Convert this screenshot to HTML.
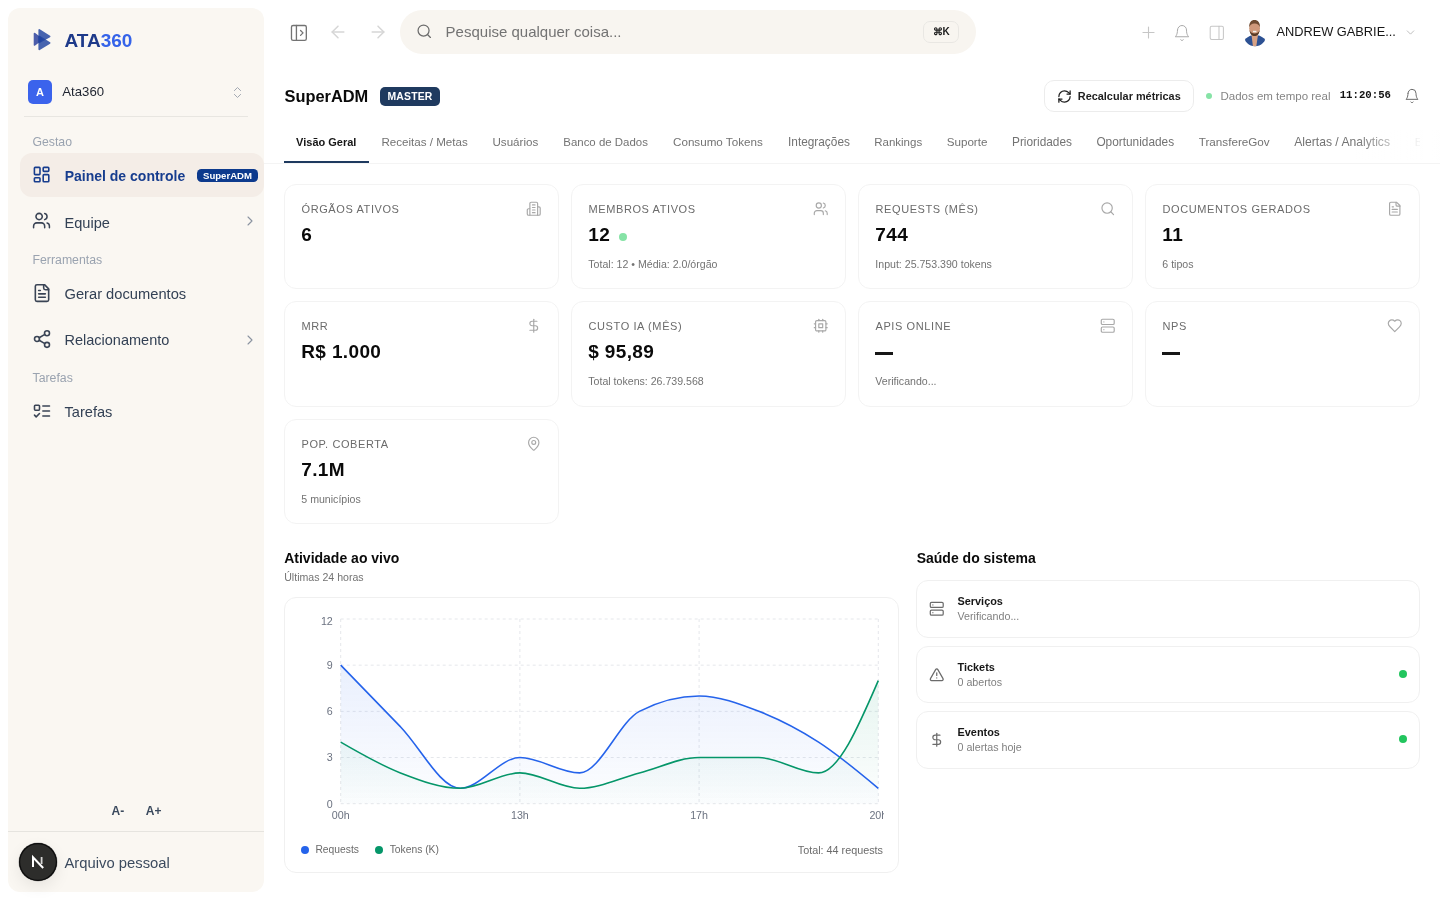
<!DOCTYPE html>
<html><head><meta charset="utf-8"><title>SuperADM</title>
<style>
html,body{margin:0;padding:0;}
body{width:1440px;height:900px;position:relative;overflow:hidden;background:#fff;font-family:"Liberation Sans", sans-serif;}
.t{position:absolute;white-space:nowrap;line-height:1;}
svg{display:block}
</style></head><body>
<div id="root" style="position:absolute;left:0;top:0;width:1440px;height:900px;will-change:transform;">
<div style="position:absolute;left:8px;top:8px;width:256px;height:884px;background:#faf7f2;border-radius:12px;"></div>
<svg style="position:absolute;left:33px;top:28px" width="18" height="23" viewBox="0 0 18 23"><path d="M1.6 5.6 L8.8 11.3 L1.6 16.9 Z" fill="#273d9c" opacity="0.82" stroke="#273d9c" stroke-width="1.8" stroke-linejoin="round"/><path d="M6.3 2.0 L16.6 8.4 L6.3 14.2 Z" fill="#2144a1" opacity="0.82" stroke="#2144a1" stroke-width="1.8" stroke-linejoin="round"/><path d="M6.3 8.6 L16.6 14.9 L6.3 21.2 Z" fill="#2144a1" opacity="0.82" stroke="#2144a1" stroke-width="1.8" stroke-linejoin="round"/></svg>
<div class="t" style="left:64.50px;top:31.00px;font-size:19px;font-weight:700;color:#000;"><span style="color:#1e3a8a">ATA</span><span style="color:#3563e9">360</span></div>
<div style="position:absolute;left:28px;top:80px;width:24px;height:24px;background:#3b63ec;border-radius:5px;"></div>
<div class="t" style="left:40.00px;top:87.00px;font-size:11px;font-weight:700;color:#fff;transform:translateX(-50%);">A</div>
<div class="t" style="left:62.30px;top:85.00px;font-size:13.2px;font-weight:400;color:#1f2430;">Ata360</div>
<svg style="position:absolute;left:229.50px;top:84.50px;" width="15" height="15" viewBox="0 0 24 24" fill="none" stroke="#a3a9b2" stroke-width="1.6" stroke-linecap="round" stroke-linejoin="round"><path d="m7 15 5 5 5-5"/><path d="m7 9 5-5 5 5"/></svg>
<div style="position:absolute;left:24px;top:116px;width:224px;height:1px;background:#e8e6e1;"></div>
<div class="t" style="left:32.50px;top:136.00px;font-size:12.25px;font-weight:400;color:#9aa3b0;">Gestao</div>
<div style="position:absolute;left:20px;top:153px;width:244px;height:44px;background:#f4ede7;border-radius:12px;"></div>
<svg style="position:absolute;left:32.40px;top:165.20px;" width="19.2" height="19.2" viewBox="0 0 24 24" fill="none" stroke="#173d8e" stroke-width="2" stroke-linecap="round" stroke-linejoin="round"><rect x="3" y="3" width="7" height="9" rx="1"/><rect x="14" y="3" width="7" height="5" rx="1"/><rect x="14" y="12" width="7" height="9" rx="1"/><rect x="3" y="16" width="7" height="5" rx="1"/></svg>
<div class="t" style="left:64.70px;top:169.00px;font-size:14px;font-weight:700;color:#173d8e;">Painel de controle</div>
<div style="position:absolute;left:197px;top:169px;width:61px;height:13px;background:#0d3a8d;border-radius:4.5px;"></div>
<div class="t" style="left:227.50px;top:171.00px;font-size:9.6px;font-weight:700;color:#fff;transform:translateX(-50%);">SuperADM</div>
<svg style="position:absolute;left:32.30px;top:211.00px;" width="19" height="19" viewBox="0 0 24 24" fill="none" stroke="#3a4455" stroke-width="1.9" stroke-linecap="round" stroke-linejoin="round"><path d="M16 21v-2a4 4 0 0 0-4-4H6a4 4 0 0 0-4 4v2"/><circle cx="9" cy="7" r="4"/><path d="M22 21v-2a4 4 0 0 0-3-3.87"/><path d="M16 3.13a4 4 0 0 1 0 7.75"/></svg>
<div class="t" style="left:64.50px;top:216.00px;font-size:14.6px;font-weight:400;color:#334155;">Equipe</div>
<svg style="position:absolute;left:242.00px;top:213.00px;" width="16" height="16" viewBox="0 0 24 24" fill="none" stroke="#8a93a0" stroke-width="1.6" stroke-linecap="round" stroke-linejoin="round"><path d="m9 18 6-6-6-6"/></svg>
<div class="t" style="left:32.50px;top:254.00px;font-size:12.3px;font-weight:400;color:#9aa3b0;">Ferramentas</div>
<svg style="position:absolute;left:31.50px;top:283.00px;" width="20" height="20" viewBox="0 0 24 24" fill="none" stroke="#3a4455" stroke-width="1.9" stroke-linecap="round" stroke-linejoin="round"><path d="M15 2H6a2 2 0 0 0-2 2v16a2 2 0 0 0 2 2h12a2 2 0 0 0 2-2V7Z"/><path d="M14 2v4a2 2 0 0 0 2 2h4"/><path d="M10 9H8"/><path d="M16 13H8"/><path d="M16 17H8"/></svg>
<div class="t" style="left:64.50px;top:287.00px;font-size:14.7px;font-weight:400;color:#334155;">Gerar documentos</div>
<svg style="position:absolute;left:31.50px;top:329.00px;" width="20" height="20" viewBox="0 0 24 24" fill="none" stroke="#3a4455" stroke-width="1.9" stroke-linecap="round" stroke-linejoin="round"><circle cx="18" cy="5" r="3"/><circle cx="6" cy="12" r="3"/><circle cx="18" cy="19" r="3"/><line x1="8.59" x2="15.42" y1="13.51" y2="17.49"/><line x1="15.41" x2="8.59" y1="6.51" y2="10.49"/></svg>
<div class="t" style="left:64.50px;top:333.00px;font-size:14.5px;font-weight:400;color:#334155;">Relacionamento</div>
<svg style="position:absolute;left:242.00px;top:332.00px;" width="16" height="16" viewBox="0 0 24 24" fill="none" stroke="#8a93a0" stroke-width="1.6" stroke-linecap="round" stroke-linejoin="round"><path d="m9 18 6-6-6-6"/></svg>
<div class="t" style="left:32.50px;top:372.00px;font-size:12.3px;font-weight:400;color:#9aa3b0;">Tarefas</div>
<svg style="position:absolute;left:31.50px;top:401.00px;" width="20" height="20" viewBox="0 0 24 24" fill="none" stroke="#3a4455" stroke-width="1.9" stroke-linecap="round" stroke-linejoin="round"><rect x="3" y="5" width="6" height="6" rx="1"/><path d="m3 17 2 2 4-4"/><path d="M13 6h8"/><path d="M13 12h8"/><path d="M13 18h8"/></svg>
<div class="t" style="left:64.50px;top:405.00px;font-size:14.6px;font-weight:400;color:#334155;">Tarefas</div>
<div class="t" style="left:111.50px;top:805.00px;font-size:12px;font-weight:700;color:#3b4a5e;">A-</div>
<div class="t" style="left:145.80px;top:805.00px;font-size:12px;font-weight:700;color:#3b4a5e;">A+</div>
<div style="position:absolute;left:8px;top:831px;width:256px;height:1px;background:#e6e4df;"></div>
<div class="t" style="left:64.50px;top:856.00px;font-size:14.8px;font-weight:400;color:#3b4a5e;">Arquivo pessoal</div>
<div style="position:absolute;left:19px;top:843px;width:38px;height:38px;border-radius:50%;background:#2d2d2b;box-shadow:inset 0 0 0 1.2px #0d0d0d,0 0 0 0.6px rgba(120,120,120,0.5),0 6px 16px rgba(0,0,0,0.08);"></div>
<svg style="position:absolute;left:28px;top:852px" width="20" height="20" viewBox="0 0 20 20"><path d="M5 15V5.2 L15.2 16" stroke="#fff" stroke-width="2" fill="none"/><path d="M13.6 5v7" stroke="#fff" stroke-width="1.8" fill="none" opacity="0.8"/></svg>
<svg style="position:absolute;left:288.60px;top:22.80px;" width="19.8" height="19.8" viewBox="0 0 24 24" fill="none" stroke="#737373" stroke-width="1.6" stroke-linecap="round" stroke-linejoin="round"><rect x="3" y="3" width="18" height="18" rx="2"/><path d="M9 3v18"/><path d="m14 9 3 3-3 3"/></svg>
<svg style="position:absolute;left:327.50px;top:21.50px;" width="20" height="20" viewBox="0 0 24 24" fill="none" stroke="#d6d6d6" stroke-width="1.8" stroke-linecap="round" stroke-linejoin="round"><path d="m12 19-7-7 7-7"/><path d="M19 12H5"/></svg>
<svg style="position:absolute;left:367.50px;top:21.50px;" width="20" height="20" viewBox="0 0 24 24" fill="none" stroke="#d6d6d6" stroke-width="1.8" stroke-linecap="round" stroke-linejoin="round"><path d="M5 12h14"/><path d="m12 5 7 7-7 7"/></svg>
<div style="position:absolute;left:400px;top:10px;width:576px;height:44px;background:#f8f5f0;border-radius:22px;"></div>
<svg style="position:absolute;left:416.30px;top:23.20px;" width="16.5" height="16.5" viewBox="0 0 24 24" fill="none" stroke="#6b6b6b" stroke-width="1.8" stroke-linecap="round" stroke-linejoin="round"><circle cx="11" cy="11" r="8"/><path d="m21 21-4.3-4.3"/></svg>
<div class="t" style="left:445.60px;top:24.00px;font-size:15px;font-weight:400;color:#737373;">Pesquise qualquer coisa...</div>
<div style="position:absolute;left:923px;top:21px;width:36px;height:21.5px;border:1px solid #e9e7e3;border-radius:7px;box-sizing:border-box;"></div>
<div class="t" style="left:941.20px;top:27.00px;font-size:10px;font-weight:700;color:#1a1a1a;transform:translateX(-50%);">⌘K</div>
<svg style="position:absolute;left:1138.50px;top:22.50px;" width="19" height="19" viewBox="0 0 24 24" fill="none" stroke="#c6c6c6" stroke-width="1.4" stroke-linecap="round" stroke-linejoin="round"><path d="M5 12h14"/><path d="M12 5v14"/></svg>
<svg style="position:absolute;left:1173.00px;top:24.00px;" width="18" height="18" viewBox="0 0 24 24" fill="none" stroke="#a8a8a8" stroke-width="1.3" stroke-linecap="round" stroke-linejoin="round"><path d="M6 8a6 6 0 0 1 12 0c0 7 3 9 3 9H3s3-2 3-9"/><path d="M10.3 21a1.94 1.94 0 0 0 3.4 0"/></svg>
<svg style="position:absolute;left:1207.70px;top:23.60px;" width="17.6" height="17.6" viewBox="0 0 24 24" fill="none" stroke="#c6c6c6" stroke-width="1.4" stroke-linecap="round" stroke-linejoin="round"><rect x="3" y="3" width="18" height="18" rx="2"/><path d="M15 3v18"/></svg>
<svg style="position:absolute;left:1243px;top:19px" width="24" height="28" viewBox="0 0 24 28"><defs><clipPath id="avc"><circle cx="12" cy="16" r="11.2"/></clipPath></defs><g clip-path="url(#avc)"><ellipse cx="12" cy="27.5" rx="12.5" ry="11.5" fill="#2d5193"/><path d="M8.5 16 L15 16 L13.2 28 L10 28 Z" fill="#d7a184"/></g><ellipse cx="11.6" cy="9.2" rx="5.4" ry="7.4" fill="#cf987a"/><path d="M6.2 8.5 C6 3.5 8 1 11.5 1 C15 1 17.2 3.5 17 8.5 C16 5.5 14 4.5 11.5 4.6 C9 4.5 7.2 5.5 6.2 8.5 Z" fill="#6e4a30"/><path d="M6.5 11 C7 15.5 9 17 11.6 17 C14.2 17 16.2 15.5 16.7 11 C15.5 13.8 14 14.5 11.6 14.5 C9.2 14.5 7.7 13.8 6.5 11 Z" fill="#5b3b26"/><rect x="10" y="11.8" width="3.4" height="1.5" fill="#f4f1ea"/></svg>
<div class="t" style="left:1276.40px;top:26.00px;font-size:12.8px;font-weight:400;color:#171717;">ANDREW GABRIE...</div>
<svg style="position:absolute;left:1403.50px;top:25.50px;" width="13" height="13" viewBox="0 0 24 24" fill="none" stroke="#b5b5b5" stroke-width="1.6" stroke-linecap="round" stroke-linejoin="round"><path d="m6 9 6 6 6-6"/></svg>
<div class="t" style="left:284.50px;top:88.00px;font-size:16.4px;font-weight:700;color:#0a0a0a;">SuperADM</div>
<div style="position:absolute;left:380px;top:87px;width:60px;height:19px;background:#1f3a5f;border-radius:5px;"></div>
<div class="t" style="left:410.00px;top:92.00px;font-size:10.4px;font-weight:700;color:#fff;letter-spacing:0.2px;transform:translateX(-50%);">MASTER</div>
<div style="position:absolute;left:1044px;top:80px;width:149.5px;height:31.5px;background:#fff;border:1px solid #ececec;border-radius:10px;box-sizing:border-box;"></div>
<svg style="position:absolute;left:1056.50px;top:89.00px;" width="15" height="15" viewBox="0 0 24 24" fill="none" stroke="#1f1f1f" stroke-width="2" stroke-linecap="round" stroke-linejoin="round"><path d="M3 12a9 9 0 0 1 9-9 9.75 9.75 0 0 1 6.74 2.74L21 8"/><path d="M21 3v5h-5"/><path d="M21 12a9 9 0 0 1-9 9 9.75 9.75 0 0 1-6.74-2.74L3 16"/><path d="M8 16H3v5"/></svg>
<div class="t" style="left:1077.80px;top:91.00px;font-size:10.9px;font-weight:700;color:#1f1f1f;">Recalcular métricas</div>
<div style="position:absolute;left:1206px;top:93px;width:6px;height:6px;background:#86e3a6;border-radius:50%;"></div>
<div class="t" style="left:1220.50px;top:91.00px;font-size:11.5px;font-weight:400;color:#858585;">Dados em tempo real</div>
<div class="t" style="left:1339.70px;top:89.84px;font-size:10.7px;font-weight:700;color:#111;font-family:'Liberation Mono', monospace;">11:20:56</div>
<svg style="position:absolute;left:1404.20px;top:87.80px;" width="16" height="16" viewBox="0 0 24 24" fill="none" stroke="#6b6b6b" stroke-width="1.5" stroke-linecap="round" stroke-linejoin="round"><path d="M6 8a6 6 0 0 1 12 0c0 7 3 9 3 9H3s3-2 3-9"/><path d="M10.3 21a1.94 1.94 0 0 0 3.4 0"/></svg>
<div style="position:absolute;left:264px;top:163px;width:1176px;height:1px;background:#f4f4f4;"></div>
<div style="position:absolute;left:284px;top:160.6px;width:85px;height:2.4px;background:#1e3a5f;"></div>
<div class="t" style="left:296.10px;top:137.00px;font-size:11px;font-weight:700;color:#171717;">Visão Geral</div>
<div class="t" style="left:381.40px;top:136.00px;font-size:11.6px;font-weight:400;color:#737373;">Receitas / Metas</div>
<div class="t" style="left:492.50px;top:136.00px;font-size:11.6px;font-weight:400;color:#737373;">Usuários</div>
<div class="t" style="left:563.30px;top:137.00px;font-size:11.45px;font-weight:400;color:#737373;">Banco de Dados</div>
<div class="t" style="left:673.00px;top:136.00px;font-size:11.65px;font-weight:400;color:#737373;">Consumo Tokens</div>
<div class="t" style="left:788.00px;top:137.00px;font-size:11.85px;font-weight:400;color:#737373;">Integrações</div>
<div class="t" style="left:874.20px;top:137.00px;font-size:11.5px;font-weight:400;color:#737373;">Rankings</div>
<div class="t" style="left:946.70px;top:136.00px;font-size:11.65px;font-weight:400;color:#737373;">Suporte</div>
<div class="t" style="left:1012.00px;top:137.00px;font-size:11.85px;font-weight:400;color:#737373;">Prioridades</div>
<div class="t" style="left:1096.40px;top:137.00px;font-size:11.85px;font-weight:400;color:#737373;">Oportunidades</div>
<div class="t" style="left:1198.70px;top:136.00px;font-size:11.7px;font-weight:400;color:#737373;">TransfereGov</div>
<div class="t" style="left:1294.20px;top:136.00px;font-size:12.15px;font-weight:400;color:#737373;">Alertas / Analytics</div>
<div style="position:absolute;left:1414px;top:130px;width:6px;height:20px;overflow:hidden">
<div class="t" style="left:0.70px;top:7.00px;font-size:11.5px;font-weight:400;color:#737373;">Billing</div>
</div>
<div style="position:absolute;left:1355px;top:130px;width:85px;height:30px;background:linear-gradient(to right,rgba(255,255,255,0),rgba(255,255,255,0.92) 75%,#fff);"></div>
<div style="position:absolute;left:284px;top:184px;width:275px;height:105px;background:#fff;border:1px solid #f3f3f3;border-radius:12px;box-sizing:border-box;"></div>
<div class="t" style="left:301.50px;top:204.00px;font-size:11px;font-weight:400;color:#6b6b6b;letter-spacing:0.6px;">ÓRGÃOS ATIVOS</div>
<div class="t" style="left:301.30px;top:225.00px;font-size:19px;font-weight:700;color:#0a0a0a;letter-spacing:0.35px;">6</div>
<svg style="position:absolute;left:526.20px;top:201.00px;" width="15.5" height="15.5" viewBox="0 0 24 24" fill="none" stroke="#a8a8a8" stroke-width="1.8" stroke-linecap="round" stroke-linejoin="round"><path d="M6 22V4a2 2 0 0 1 2-2h8a2 2 0 0 1 2 2v18Z"/><path d="M6 12H4a2 2 0 0 0-2 2v6a2 2 0 0 0 2 2h2"/><path d="M18 9h2a2 2 0 0 1 2 2v9a2 2 0 0 1-2 2h-2"/><path d="M10 6h4"/><path d="M10 10h4"/><path d="M10 14h4"/><path d="M10 18h4"/></svg>
<div style="position:absolute;left:571px;top:184px;width:275px;height:105px;background:#fff;border:1px solid #f3f3f3;border-radius:12px;box-sizing:border-box;"></div>
<div class="t" style="left:588.50px;top:204.00px;font-size:11px;font-weight:400;color:#6b6b6b;letter-spacing:0.6px;">MEMBROS ATIVOS</div>
<div class="t" style="left:588.30px;top:225.00px;font-size:19px;font-weight:700;color:#0a0a0a;letter-spacing:0.35px;">12</div>
<div class="t" style="left:588.30px;top:259.00px;font-size:10.6px;font-weight:400;color:#737373;">Total: 12 • Média: 2.0/órgão</div>
<svg style="position:absolute;left:813.20px;top:201.00px;" width="15.5" height="15.5" viewBox="0 0 24 24" fill="none" stroke="#a8a8a8" stroke-width="1.8" stroke-linecap="round" stroke-linejoin="round"><path d="M16 21v-2a4 4 0 0 0-4-4H6a4 4 0 0 0-4 4v2"/><circle cx="9" cy="7" r="4"/><path d="M22 21v-2a4 4 0 0 0-3-3.87"/><path d="M16 3.13a4 4 0 0 1 0 7.75"/></svg>
<div style="position:absolute;left:858px;top:184px;width:275px;height:105px;background:#fff;border:1px solid #f3f3f3;border-radius:12px;box-sizing:border-box;"></div>
<div class="t" style="left:875.50px;top:204.00px;font-size:11px;font-weight:400;color:#6b6b6b;letter-spacing:0.6px;">REQUESTS (MÊS)</div>
<div class="t" style="left:875.30px;top:225.00px;font-size:19px;font-weight:700;color:#0a0a0a;letter-spacing:0.35px;">744</div>
<div class="t" style="left:875.30px;top:259.00px;font-size:10.6px;font-weight:400;color:#737373;">Input: 25.753.390 tokens</div>
<svg style="position:absolute;left:1100.20px;top:201.00px;" width="15.5" height="15.5" viewBox="0 0 24 24" fill="none" stroke="#a8a8a8" stroke-width="1.8" stroke-linecap="round" stroke-linejoin="round"><circle cx="11" cy="11" r="8"/><path d="m21 21-4.3-4.3"/></svg>
<div style="position:absolute;left:1145px;top:184px;width:275px;height:105px;background:#fff;border:1px solid #f3f3f3;border-radius:12px;box-sizing:border-box;"></div>
<div class="t" style="left:1162.50px;top:204.00px;font-size:11px;font-weight:400;color:#6b6b6b;letter-spacing:0.6px;">DOCUMENTOS GERADOS</div>
<div class="t" style="left:1162.30px;top:225.00px;font-size:19px;font-weight:700;color:#0a0a0a;letter-spacing:0.35px;">11</div>
<div class="t" style="left:1162.30px;top:259.00px;font-size:10.6px;font-weight:400;color:#737373;">6 tipos</div>
<svg style="position:absolute;left:1387.20px;top:201.00px;" width="15.5" height="15.5" viewBox="0 0 24 24" fill="none" stroke="#a8a8a8" stroke-width="1.8" stroke-linecap="round" stroke-linejoin="round"><path d="M15 2H6a2 2 0 0 0-2 2v16a2 2 0 0 0 2 2h12a2 2 0 0 0 2-2V7Z"/><path d="M14 2v4a2 2 0 0 0 2 2h4"/><path d="M10 9H8"/><path d="M16 13H8"/><path d="M16 17H8"/></svg>
<div style="position:absolute;left:284px;top:301px;width:275px;height:106px;background:#fff;border:1px solid #f3f3f3;border-radius:12px;box-sizing:border-box;"></div>
<div class="t" style="left:301.50px;top:321.00px;font-size:11px;font-weight:400;color:#6b6b6b;letter-spacing:0.6px;">MRR</div>
<div class="t" style="left:301.30px;top:342.00px;font-size:19px;font-weight:700;color:#0a0a0a;letter-spacing:0.35px;">R$ 1.000</div>
<svg style="position:absolute;left:526.20px;top:318.00px;" width="15.5" height="15.5" viewBox="0 0 24 24" fill="none" stroke="#a8a8a8" stroke-width="1.8" stroke-linecap="round" stroke-linejoin="round"><line x1="12" x2="12" y1="2" y2="22"/><path d="M17 5H9.5a3.5 3.5 0 0 0 0 7h5a3.5 3.5 0 0 1 0 7H6"/></svg>
<div style="position:absolute;left:571px;top:301px;width:275px;height:106px;background:#fff;border:1px solid #f3f3f3;border-radius:12px;box-sizing:border-box;"></div>
<div class="t" style="left:588.50px;top:321.00px;font-size:11px;font-weight:400;color:#6b6b6b;letter-spacing:0.6px;">CUSTO IA (MÊS)</div>
<div class="t" style="left:588.30px;top:342.00px;font-size:19px;font-weight:700;color:#0a0a0a;letter-spacing:0.35px;">$ 95,89</div>
<div class="t" style="left:588.30px;top:376.00px;font-size:10.6px;font-weight:400;color:#737373;">Total tokens: 26.739.568</div>
<svg style="position:absolute;left:813.20px;top:318.00px;" width="15.5" height="15.5" viewBox="0 0 24 24" fill="none" stroke="#a8a8a8" stroke-width="1.8" stroke-linecap="round" stroke-linejoin="round"><rect x="4" y="4" width="16" height="16" rx="2"/><rect x="9" y="9" width="6" height="6"/><path d="M15 2v2"/><path d="M15 20v2"/><path d="M2 15h2"/><path d="M2 9h2"/><path d="M20 15h2"/><path d="M20 9h2"/><path d="M9 2v2"/><path d="M9 20v2"/></svg>
<div style="position:absolute;left:858px;top:301px;width:275px;height:106px;background:#fff;border:1px solid #f3f3f3;border-radius:12px;box-sizing:border-box;"></div>
<div class="t" style="left:875.50px;top:321.00px;font-size:11px;font-weight:400;color:#6b6b6b;letter-spacing:0.6px;">APIS ONLINE</div>
<div style="position:absolute;left:875px;top:352px;width:18px;height:2.6px;background:#171717;"></div>
<div class="t" style="left:875.30px;top:376.00px;font-size:10.6px;font-weight:400;color:#737373;">Verificando...</div>
<svg style="position:absolute;left:1100.20px;top:318.00px;" width="15.5" height="15.5" viewBox="0 0 24 24" fill="none" stroke="#a8a8a8" stroke-width="1.8" stroke-linecap="round" stroke-linejoin="round"><rect x="2" y="2" width="20" height="8" rx="2"/><rect x="2" y="14" width="20" height="8" rx="2"/><line x1="6" x2="6.01" y1="6" y2="6"/><line x1="6" x2="6.01" y1="18" y2="18"/></svg>
<div style="position:absolute;left:1145px;top:301px;width:275px;height:106px;background:#fff;border:1px solid #f3f3f3;border-radius:12px;box-sizing:border-box;"></div>
<div class="t" style="left:1162.50px;top:321.00px;font-size:11px;font-weight:400;color:#6b6b6b;letter-spacing:0.6px;">NPS</div>
<div style="position:absolute;left:1162px;top:352px;width:18px;height:2.6px;background:#171717;"></div>
<svg style="position:absolute;left:1387.20px;top:318.00px;" width="15.5" height="15.5" viewBox="0 0 24 24" fill="none" stroke="#a8a8a8" stroke-width="1.8" stroke-linecap="round" stroke-linejoin="round"><path d="M19 14c1.49-1.46 3-3.21 3-5.5A5.5 5.5 0 0 0 16.5 3c-1.76 0-3 .5-4.5 2-1.5-1.5-2.74-2-4.5-2A5.5 5.5 0 0 0 2 8.5c0 2.3 1.5 4.05 3 5.5l7 7Z"/></svg>
<div style="position:absolute;left:284px;top:419px;width:275px;height:105px;background:#fff;border:1px solid #f3f3f3;border-radius:12px;box-sizing:border-box;"></div>
<div class="t" style="left:301.50px;top:439.00px;font-size:11px;font-weight:400;color:#6b6b6b;letter-spacing:0.6px;">POP. COBERTA</div>
<div class="t" style="left:301.30px;top:460.00px;font-size:19px;font-weight:700;color:#0a0a0a;letter-spacing:0.35px;">7.1M</div>
<div class="t" style="left:301.30px;top:494.00px;font-size:10.6px;font-weight:400;color:#737373;">5 municípios</div>
<svg style="position:absolute;left:526.20px;top:436.00px;" width="15.5" height="15.5" viewBox="0 0 24 24" fill="none" stroke="#a8a8a8" stroke-width="1.8" stroke-linecap="round" stroke-linejoin="round"><path d="M20 10c0 4.993-5.539 10.193-7.399 11.799a1 1 0 0 1-1.202 0C9.539 20.193 4 14.993 4 10a8 8 0 0 1 16 0"/><circle cx="12" cy="10" r="3"/></svg>
<div style="position:absolute;left:619px;top:233px;width:8px;height:8px;background:#86e3a6;border-radius:50%;"></div>
<div class="t" style="left:284.20px;top:551.00px;font-size:14px;font-weight:700;color:#0a0a0a;">Atividade ao vivo</div>
<div class="t" style="left:284.20px;top:572.00px;font-size:10.6px;font-weight:400;color:#737373;">Últimas 24 horas</div>
<div style="position:absolute;left:284px;top:597px;width:615px;height:276px;background:#fff;border:1px solid #f0f0f0;border-radius:12px;box-sizing:border-box;"></div>
<div style="position:absolute;left:0;top:0;width:1440px;height:900px;pointer-events:none"><svg style="position:absolute;left:0;top:0" width="1440" height="900" viewBox="0 0 1440 900"><defs><linearGradient id="gb" x1="0" y1="0" x2="0" y2="1"><stop offset="0" stop-color="#2563eb" stop-opacity="0.10"/><stop offset="1" stop-color="#2563eb" stop-opacity="0.01"/></linearGradient><linearGradient id="gg" x1="0" y1="0" x2="0" y2="1"><stop offset="0" stop-color="#059669" stop-opacity="0.10"/><stop offset="1" stop-color="#059669" stop-opacity="0.01"/></linearGradient></defs><line x1="340.7" x2="878.3" y1="803.70" y2="803.70" stroke="#e5e7eb" stroke-width="1" stroke-dasharray="3 3"/><line x1="340.7" x2="878.3" y1="757.53" y2="757.53" stroke="#e5e7eb" stroke-width="1" stroke-dasharray="3 3"/><line x1="340.7" x2="878.3" y1="711.35" y2="711.35" stroke="#e5e7eb" stroke-width="1" stroke-dasharray="3 3"/><line x1="340.7" x2="878.3" y1="665.17" y2="665.17" stroke="#e5e7eb" stroke-width="1" stroke-dasharray="3 3"/><line x1="340.7" x2="878.3" y1="619.00" y2="619.00" stroke="#e5e7eb" stroke-width="1" stroke-dasharray="3 3"/><line x1="340.70" x2="340.70" y1="619" y2="803.7" stroke="#e5e7eb" stroke-width="1" stroke-dasharray="3 3"/><line x1="519.90" x2="519.90" y1="619" y2="803.7" stroke="#e5e7eb" stroke-width="1" stroke-dasharray="3 3"/><line x1="699.10" x2="699.10" y1="619" y2="803.7" stroke="#e5e7eb" stroke-width="1" stroke-dasharray="3 3"/><line x1="878.30" x2="878.30" y1="619" y2="803.7" stroke="#e5e7eb" stroke-width="1" stroke-dasharray="3 3"/><path d="M340.70,665.17C360.61,685.70,380.52,706.22,400.43,726.74C420.34,747.26,440.26,788.31,460.17,788.31C480.08,788.31,499.99,757.53,519.90,757.53C539.81,757.53,559.72,772.92,579.63,772.92C599.54,772.92,619.46,721.61,639.37,711.35C659.28,701.09,679.19,695.96,699.10,695.96C719.01,695.96,738.92,703.65,758.83,711.35C778.74,719.05,798.66,729.31,818.57,742.13C838.48,754.96,858.39,771.63,878.30,788.31L878.30,803.70L340.70,803.70Z" fill="url(#gb)"/><path d="M340.70,742.13C360.61,753.68,380.52,765.22,400.43,772.92C420.34,780.61,440.26,788.31,460.17,788.31C480.08,788.31,499.99,772.92,519.90,772.92C539.81,772.92,559.72,788.31,579.63,788.31C599.54,788.31,619.46,778.05,639.37,772.92C659.28,767.79,679.19,757.53,699.10,757.53C719.01,757.53,738.92,757.53,758.83,757.53C778.74,757.53,798.66,772.92,818.57,772.92C838.48,772.92,858.39,726.74,878.30,680.57L878.30,803.70L340.70,803.70Z" fill="url(#gg)"/><path d="M340.70,665.17C360.61,685.70,380.52,706.22,400.43,726.74C420.34,747.26,440.26,788.31,460.17,788.31C480.08,788.31,499.99,757.53,519.90,757.53C539.81,757.53,559.72,772.92,579.63,772.92C599.54,772.92,619.46,721.61,639.37,711.35C659.28,701.09,679.19,695.96,699.10,695.96C719.01,695.96,738.92,703.65,758.83,711.35C778.74,719.05,798.66,729.31,818.57,742.13C838.48,754.96,858.39,771.63,878.30,788.31" fill="none" stroke="#2563eb" stroke-width="1.6"/><path d="M340.70,742.13C360.61,753.68,380.52,765.22,400.43,772.92C420.34,780.61,440.26,788.31,460.17,788.31C480.08,788.31,499.99,772.92,519.90,772.92C539.81,772.92,559.72,788.31,579.63,788.31C599.54,788.31,619.46,778.05,639.37,772.92C659.28,767.79,679.19,757.53,699.10,757.53C719.01,757.53,738.92,757.53,758.83,757.53C778.74,757.53,798.66,772.92,818.57,772.92C838.48,772.92,858.39,726.74,878.30,680.57" fill="none" stroke="#059669" stroke-width="1.6"/></svg></div>
<div class="t" style="right:1107.20px;top:799.00px;font-size:10.7px;font-weight:400;color:#6b7280;">0</div>
<div class="t" style="right:1107.20px;top:752.00px;font-size:10.7px;font-weight:400;color:#6b7280;">3</div>
<div class="t" style="right:1107.20px;top:706.00px;font-size:10.7px;font-weight:400;color:#6b7280;">6</div>
<div class="t" style="right:1107.20px;top:660.00px;font-size:10.7px;font-weight:400;color:#6b7280;">9</div>
<div class="t" style="right:1107.20px;top:616.00px;font-size:10.7px;font-weight:400;color:#6b7280;">12</div>
<div class="t" style="left:340.70px;top:810.00px;font-size:10.7px;font-weight:400;color:#6b7280;transform:translateX(-50%);">00h</div>
<div class="t" style="left:519.90px;top:810.00px;font-size:10.7px;font-weight:400;color:#6b7280;transform:translateX(-50%);">13h</div>
<div class="t" style="left:699.10px;top:810.00px;font-size:10.7px;font-weight:400;color:#6b7280;transform:translateX(-50%);">17h</div>
<div style="position:absolute;left:860px;top:800px;width:23.5px;height:30px;overflow:hidden">
<div class="t" style="left:18.30px;top:10.00px;font-size:10.7px;font-weight:400;color:#6b7280;transform:translateX(-50%);">20h</div>
</div>
<div style="position:absolute;left:301px;top:846px;width:8px;height:8px;background:#2563eb;border-radius:50%;"></div>
<div class="t" style="left:315.40px;top:845.00px;font-size:10.3px;font-weight:400;color:#6b6b6b;">Requests</div>
<div style="position:absolute;left:375px;top:846px;width:8px;height:8px;background:#059669;border-radius:50%;"></div>
<div class="t" style="left:389.70px;top:845.00px;font-size:10.3px;font-weight:400;color:#6b6b6b;">Tokens (K)</div>
<div class="t" style="right:557.00px;top:845.00px;font-size:10.8px;font-weight:400;color:#6b6b6b;">Total: 44 requests</div>
<div class="t" style="left:916.70px;top:551.00px;font-size:14px;font-weight:700;color:#0a0a0a;">Saúde do sistema</div>
<div style="position:absolute;left:916px;top:580px;width:504px;height:57.5px;background:#fff;border:1px solid #f0f0f0;border-radius:12px;box-sizing:border-box;"></div>
<svg style="position:absolute;left:929.25px;top:601.00px;" width="15.5" height="15.5" viewBox="0 0 24 24" fill="none" stroke="#6b6b6b" stroke-width="1.9" stroke-linecap="round" stroke-linejoin="round"><rect x="2" y="2" width="20" height="8" rx="2"/><rect x="2" y="14" width="20" height="8" rx="2"/><line x1="6" x2="6.01" y1="6" y2="6"/><line x1="6" x2="6.01" y1="18" y2="18"/></svg>
<div class="t" style="left:957.50px;top:596.00px;font-size:10.9px;font-weight:700;color:#171717;">Serviços</div>
<div class="t" style="left:957.50px;top:611.00px;font-size:10.7px;font-weight:400;color:#808080;">Verificando...</div>
<div style="position:absolute;left:916px;top:646px;width:504px;height:56.5px;background:#fff;border:1px solid #f0f0f0;border-radius:12px;box-sizing:border-box;"></div>
<svg style="position:absolute;left:929.25px;top:666.50px;" width="15.5" height="15.5" viewBox="0 0 24 24" fill="none" stroke="#6b6b6b" stroke-width="1.9" stroke-linecap="round" stroke-linejoin="round"><path d="m21.73 18-8-14a2 2 0 0 0-3.48 0l-8 14A2 2 0 0 0 4 21h16a2 2 0 0 0 1.73-3"/><path d="M12 9v4"/><path d="M12 17h.01"/></svg>
<div class="t" style="left:957.50px;top:662.00px;font-size:10.9px;font-weight:700;color:#171717;">Tickets</div>
<div class="t" style="left:957.50px;top:677.00px;font-size:10.7px;font-weight:400;color:#808080;">0 abertos</div>
<div style="position:absolute;left:1398.5px;top:669.75px;width:8px;height:8px;background:#22c55e;border-radius:50%;"></div>
<div style="position:absolute;left:916px;top:711px;width:504px;height:57.5px;background:#fff;border:1px solid #f0f0f0;border-radius:12px;box-sizing:border-box;"></div>
<svg style="position:absolute;left:929.25px;top:732.00px;" width="15.5" height="15.5" viewBox="0 0 24 24" fill="none" stroke="#6b6b6b" stroke-width="1.9" stroke-linecap="round" stroke-linejoin="round"><line x1="12" x2="12" y1="2" y2="22"/><path d="M17 5H9.5a3.5 3.5 0 0 0 0 7h5a3.5 3.5 0 0 1 0 7H6"/></svg>
<div class="t" style="left:957.50px;top:727.00px;font-size:10.9px;font-weight:700;color:#171717;">Eventos</div>
<div class="t" style="left:957.50px;top:742.00px;font-size:10.7px;font-weight:400;color:#808080;">0 alertas hoje</div>
<div style="position:absolute;left:1398.5px;top:735.25px;width:8px;height:8px;background:#22c55e;border-radius:50%;"></div>
</div>
</body></html>
